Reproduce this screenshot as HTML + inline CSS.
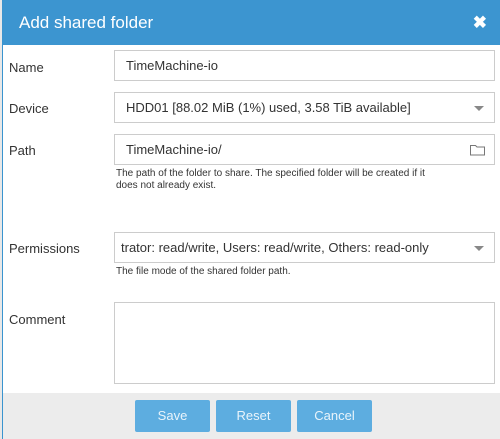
<!DOCTYPE html>
<html><head><style>
body{margin:0;width:500px;height:439px;overflow:hidden;background:#e8e8e8;font-family:"Liberation Sans",sans-serif;position:relative}
.dlg{position:absolute;left:2px;top:0;width:498px;height:439px;background:#fff;border-left:1px solid #3a94cf}
.hdr{position:absolute;left:0;top:0;right:0;height:45px;background:#3c95d0;color:#fff;font-size:17px;line-height:45px;padding-left:16px}
.x{position:absolute;right:14px;top:0;font-size:17px;font-weight:bold}
.lbl{position:absolute;left:6px;font-size:13px;color:#333}
.inp{position:absolute;left:111px;width:381px;border:1px solid #ccc;background:#fff;font-size:13px;color:#333;box-sizing:border-box;padding-left:11px;line-height:29px;height:31px;white-space:nowrap;overflow:hidden}
.help{position:absolute;left:113px;font-size:10px;color:#333;line-height:12px;width:380px}
.car{position:absolute;right:10px;top:13px;width:0;height:0;border-left:5px solid transparent;border-right:5px solid transparent;border-top:5px solid #888}
.ftr{position:absolute;left:0;right:0;top:393px;bottom:0;background:#ececec}
.btn{position:absolute;top:7px;width:75px;height:32px;background:#5dade0;color:#e9f4fb;font-size:13px;text-align:center;line-height:32px;border-radius:2px}
</style></head><body>
<div class="dlg">
<div class="hdr">Add shared folder<span class="x">✖</span></div>
<div class="lbl" style="top:60px">Name</div>
<div class="inp" style="top:50px">TimeMachine-io</div>
<div class="lbl" style="top:101px">Device</div>
<div class="inp" style="top:92px">HDD01 [88.02 MiB (1%) used, 3.58 TiB available]<div class="car"></div></div>
<div class="lbl" style="top:143px">Path</div>
<div class="inp" style="top:134px">TimeMachine-io/
<svg style="position:absolute;right:9px;top:9px" width="15" height="12" viewBox="0 0 15 12"><path d="M0.5 1.5h5l1.5 1.5h7.5v8h-14z" fill="none" stroke="#777"/></svg></div>
<div class="help" style="top:168px">The path of the folder to share. The specified folder will be created if it<br>does not already exist.</div>
<div class="lbl" style="top:241px">Permissions</div>
<div class="inp" style="top:232px;padding-left:6px">trator: read/write, Users: read/write, Others: read-only<div class="car"></div></div>
<div class="help" style="top:266px">The file mode of the shared folder path.</div>
<div class="lbl" style="top:312px">Comment</div>
<div class="inp" style="top:302px;height:82px"></div>
<div class="ftr">
<div class="btn" style="left:132px">Save</div>
<div class="btn" style="left:213px">Reset</div>
<div class="btn" style="left:294px">Cancel</div>
</div>
</div>
</body></html>
